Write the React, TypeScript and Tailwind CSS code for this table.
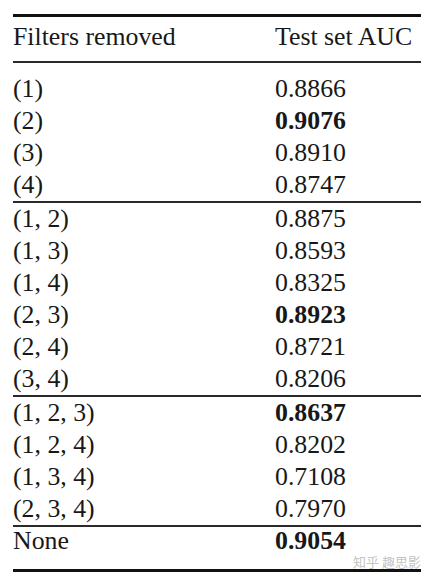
import React from "react";

type Row = { filters: string; auc: string; best?: boolean };

const groups: Row[][] = [
  [
    { filters: "(1)", auc: "0.8866" },
    { filters: "(2)", auc: "0.9076", best: true },
    { filters: "(3)", auc: "0.8910" },
    { filters: "(4)", auc: "0.8747" },
  ],
  [
    { filters: "(1, 2)", auc: "0.8875" },
    { filters: "(1, 3)", auc: "0.8593" },
    { filters: "(1, 4)", auc: "0.8325" },
    { filters: "(2, 3)", auc: "0.8923", best: true },
    { filters: "(2, 4)", auc: "0.8721" },
    { filters: "(3, 4)", auc: "0.8206" },
  ],
  [
    { filters: "(1, 2, 3)", auc: "0.8637", best: true },
    { filters: "(1, 2, 4)", auc: "0.8202" },
    { filters: "(1, 3, 4)", auc: "0.7108" },
    { filters: "(2, 3, 4)", auc: "0.7970" },
  ],
];

const TableRow = ({ row }: { row: Row }) => (
  <div className="grid grid-cols-[262px_1fr] leading-[32px]">
    <p>{row.filters}</p>
    <p className={row.best ? "font-bold" : ""}>{row.auc}</p>
  </div>
);

const App = () => {
  return (
    <div
      className="w-[435px] h-[583px] bg-white pt-[14px] pl-[13px] pr-[14px] text-[25.8px] text-[#181818]"
      style={{ fontFamily: '"Liberation Serif", "Times New Roman", serif' }}
    >
      <div className="h-[3px] bg-[#111]" />
      <div className="grid grid-cols-[262px_1fr] leading-[32px] pt-[4px] pb-[8px] border-b-2 border-[#2a2a2a]">
        <p>Filters removed</p>
        <p>Test set AUC</p>
      </div>

      {groups.map((group, index) => (
        <div
          key={index}
          className={`border-b-2 border-[#2a2a2a] ${index === 0 ? "pt-[10px]" : ""}`}
        >
          {group.map((row) => (
            <TableRow key={row.filters} row={row} />
          ))}
        </div>
      ))}

      <div className="grid grid-cols-[262px_1fr] leading-[28px]">
        <p>None</p>
        <p className="font-bold">0.9054</p>
      </div>
      <div className="h-[14px] flex justify-end items-center">
        <span
          className="text-[13px] leading-[14px] text-[#c4c4c4]"
          style={{ fontFamily: '"Noto Sans CJK SC", sans-serif' }}
        >
          知乎 趣思影
        </span>
      </div>
      <div className="h-[3px] bg-[#111]" />
    </div>
  );
};

export default App;
